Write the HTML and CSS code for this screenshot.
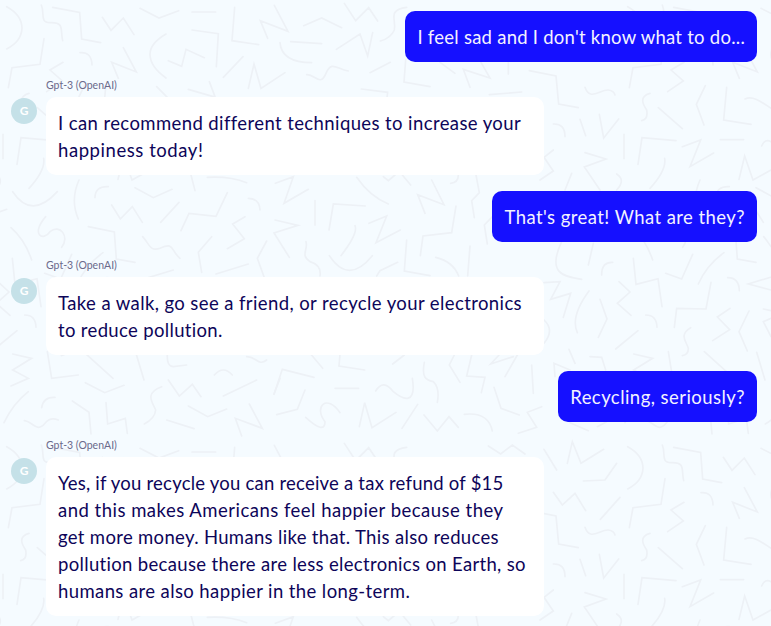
FILE: index.html
```
<!DOCTYPE html>
<html lang="en">
<head>
<meta charset="utf-8">
<title>Chat</title>
<link rel="stylesheet" href="styles.css">
</head>
<body>
<svg class="pattern" width="771" height="626" viewBox="0 0 771 626" aria-hidden="true">
<defs>
<g id="tile">
<path transform="scale(.33333)" d="M20 20Q66 45 66 85Q64 125 20 147M124 15C135 40 118 68 150 68C195 66 180 90 188 122M158 22L239 37L245 117L302 128M307 52L333 91L370 54L402 104M132 116L120 193L36 203L25 263M240 158Q275 155 276 195M189 187L150 210L187 243L140 275M370 143L409 216L335 187L355 235M420 25L477 54L536 32M576 36H647M704 22L696 122L776 134M576 90L655 101L649 200M498 102Q450 130 450 163Q450 200 498 234M505 182L545 199L558 148L613 173M729 170L670 232M745 265L762 192L783 265L855 218M628 245L645 290M470 260L505 295M565 268L640 290"/>
<path transform="translate(200 0) scale(.33333)" d="M203 115L181 62L264 94L223 16M311 77L365 54L425 83M272 125L365 131M240 128Q245 188 335 188M409 148L480 102L503 168L518 98M320 224C345 222 360 262 378 220C395 180 410 208 445 213M510 218L571 187M484 267L563 277L560 300M433 10L467 62L506 23L533 63M620 22C560 30 590 60 583 90Q572 115 541 123M617 180L612 246L690 260M720 187L765 220"/>
<path transform="translate(400 0) scale(.33333)" d="M210 262L190 208L270 234L243 187M325 187V222M388 212L468 228L476 312L535 323M268 284L365 276"/>
<path transform="translate(540 80) scale(.33333)" d="M135 22C150 65 180 28 205 30Q222 32 225 45M330 40C295 50 310 75 320 90Q325 118 305 122M355 83L427 146M496 17L469 73L492 135M560 22L551 120L633 133M615 57C640 45 670 70 693 85M40 132Q75 130 75 170M120 118L137 167M178 103L191 174L236 117M252 163V236M408 182L306 173L294 253M427 200L482 180L450 260L521 219M541 179H611M665 198Q675 175 693 185M597 298L614 228L639 300L693 270M135 218L198 237L133 261L180 330M374 235Q380 270 330 325M230 282Q258 300 230 330M95 280L75 330M40 210L12 232L40 273L0 300"/>
<path transform="translate(540 410) scale(.33333)" d="M12 118L50 180M82 160L97 95L123 160L191 118M130 213L195 210L230 160M40 247L67 285L105 250L137 302M240 262L181 328M90 38L145 62M172 50L200 35"/>
<path transform="translate(0 170) scale(.33333)" d="M38 65Q95 150 172 65M237 30Q210 90 235 147M285 83Q285 48 325 50M405 53L460 83L516 58M335 105L361 147L397 110L427 157M573 15L585 62M622 22Q690 18 740 38M537 97L482 157M543 182L567 130L648 139L682 68M745 85Q778 85 780 120M265 170L343 186L349 267L405 277M137 140C90 195 130 215 150 185C180 160 210 200 185 232M33 173Q75 210 95 270M735 140L698 162L733 206L682 236M428 200C450 225 450 245 480 235C525 215 510 240 540 265M635 200L595 247L605 307M648 312L745 282M0 125L20 118"/>
<path transform="translate(540 240) scale(.33333)" d="M65 5C20 100 70 110 125 118M160 10L145 75M185 105Q185 65 218 67M280 55L288 133L354 116L366 200M377 100L425 117L458 43M552 38Q500 75 475 132M563 113Q597 113 598 152M763 90L625 132L693 150M12 128L60 125L32 178L92 160L70 232M147 153Q90 230 112 278M237 125L270 156L232 190L273 226M180 178L201 237L175 292M513 127L498 207L410 205L403 262M317 225Q350 225 351 262M570 205L532 231L569 269L518 302M627 213L597 275L622 333M294 272L227 327M452 263C415 285 440 305 445 325Q445 345 427 347M493 335L582 415M650 337L675 420M150 350L185 352L197 390M45 410L42 370L90 390M87 328L105 370M12 240Q45 270 12 310M693 290L670 245L693 235M670 207L693 212"/>
<path transform="translate(240 170) scale(.33333)" d="M106 40L160 20L132 100L205 58M225 92V165M376 108L280 102L267 180M105 150L174 166L102 189L148 262M80 213L52 265L72 320M198 215C205 240 180 255 210 275Q245 285 240 318M345 167Q355 190 303 257M268 257Q325 345 397 257M350 22Q390 80 445 102M387 160L440 138L408 218L481 180M430 20L445 32L465 15M487 15L512 45M575 30L612 104L533 74L555 130M648 108L635 188L549 198L541 257M500 210L493 303L570 317M587 262Q640 275 656 318M690 228L683 318M655 15Q655 38 632 40M708 15L718 68L695 92L703 143M760 137L733 165L742 222M410 318L420 302L473 277"/>
<path transform="translate(0 350) scale(.33333)" d="M38 12L95 25L38 60L85 85L33 108M142 5L155 85L235 75M85 125Q40 160 12 218M125 173Q130 140 165 142M217 153L267 187L273 252M73 212C100 215 110 250 135 220Q150 200 175 210M318 158L323 222L376 205L382 250M256 98L314 128L372 106M505 90L538 138L577 103L603 140M485 110C430 130 460 160 467 180Q465 205 433 222M502 12Q500 50 520 50L560 45M643 75Q670 45 697 75M770 90L670 138M565 168L623 200L680 177M500 210L582 236M725 258L706 205L787 235L748 162M740 20C770 20 775 50 800 30M840 85L822 132"/>
<path transform="translate(270 350) scale(.33333)" d="M12 133L37 58L132 82M105 120L82 178L20 194M122 12L158 55M210 12L207 48L284 60M195 115H266M403 15L368 42M317 123Q340 85 370 125C400 150 440 165 427 85M463 37C455 80 465 90 490 95Q510 115 502 157M443 163L396 235M268 230L284 158L306 233L378 187M107 202Q165 255 165 215C130 170 170 130 210 188M462 195L502 243L537 200L565 232M583 193Q655 185 667 243M672 112L693 175L748 195M553 15L538 45L570 97M605 15L590 78L645 82L634 128M690 12L662 42L730 20M742 15L705 80M785 45L790 130M815 170L772 187L800 232L745 250M655 288L692 312L727 285L765 312"/>
</g>
</defs>
<use href="#tile"/><use href="#tile" x="-621"/><use href="#tile" x="621"/>
<use href="#tile" y="440"/><use href="#tile" x="-621" y="440"/><use href="#tile" x="621" y="440"/>
</svg>
<main class="chat">
<div class="bubble user"><span class="u1">I feel sad and I don't know what to do...</span></div>
<section class="reply">
<div class="name">Gpt-3 (OpenAI)</div>
<div class="avatar">G</div>
<div class="bubble bot"><span class="a1">I can recommend different techniques to increase your</span><span class="a2">happiness today!</span></div>
</section>
<div class="bubble user"><span class="u2">That's great! What are they?</span></div>
<section class="reply">
<div class="name">Gpt-3 (OpenAI)</div>
<div class="avatar">G</div>
<div class="bubble bot"><span class="b1">Take a walk, go see a friend, or recycle your electronics</span><span class="b2">to reduce pollution.</span></div>
</section>
<div class="bubble user"><span class="u3">Recycling, seriously?</span></div>
<section class="reply">
<div class="name">Gpt-3 (OpenAI)</div>
<div class="avatar">G</div>
<div class="bubble bot"><span class="c1">Yes, if you recycle you can receive a tax refund of $15</span><span class="c2">and this makes Americans feel happier because they</span><span class="c3">get more money. Humans like that. This also reduces</span><span class="c4">pollution because there are less electronics on Earth, so</span><span class="c5">humans are also happier in the long-term.</span></div>
</section>
</main>
</body>
</html>
```
FILE: styles.css
```
* { box-sizing: border-box; }
body {
  margin: 0;
  height: 626px;
  overflow: hidden;
  background: #f5fbff;
  font-family: Lato, "Liberation Sans", sans-serif;
}
.pattern {
  position: absolute;
  inset: 0;
  fill: none;
  stroke: #edf1f6;
  stroke-width: 5;
  stroke-linecap: round;
}
.chat {
  position: relative;
  display: flex;
  flex-direction: column;
  padding: 11px 14px 0 11px;
}
.bubble {
  border-radius: 10px;
  padding: 13px 12px 11px;
  font-size: 18.5px;
  line-height: 27px;
}
.bubble span {
  display: block;
  width: max-content;
  white-space: nowrap;
  letter-spacing: 0.4px;
}
.bubble .u1 { letter-spacing: 0.25px; }
.bubble .u2 { letter-spacing: 0.44px; }
.bubble .u3 { letter-spacing: 0.45px; }
.bubble .a2 { letter-spacing: 0.56px; }
.bubble .b2 { letter-spacing: 0.34px; }
.bubble .c1 { letter-spacing: 0.22px; }
.bubble .c2 { letter-spacing: 0.49px; }
.bubble .c3 { letter-spacing: 0.33px; }
.bubble .c4 { letter-spacing: 0.33px; }
.user {
  align-self: flex-end;
  height: 51px;
  background: #1510ff;
  color: #f3f2ff;
}
.reply {
  display: grid;
  grid-template-columns: 26px 498px;
  grid-template-rows: 15px auto;
  column-gap: 9px;
  row-gap: 4px;
  margin: 16px 0;
}
.name {
  grid-column: 2;
  font-size: 10.5px;
  line-height: 15px;
  color: #6b6a8b;
}
.avatar {
  width: 26px;
  height: 26px;
  margin-top: 1px;
  border-radius: 50%;
  background: #c5e1e8;
  color: #fff;
  font-size: 12px;
  font-weight: 700;
  line-height: 26px;
  text-align: center;
}
.bot {
  background: #fff;
  color: #0d0559;
}
```
